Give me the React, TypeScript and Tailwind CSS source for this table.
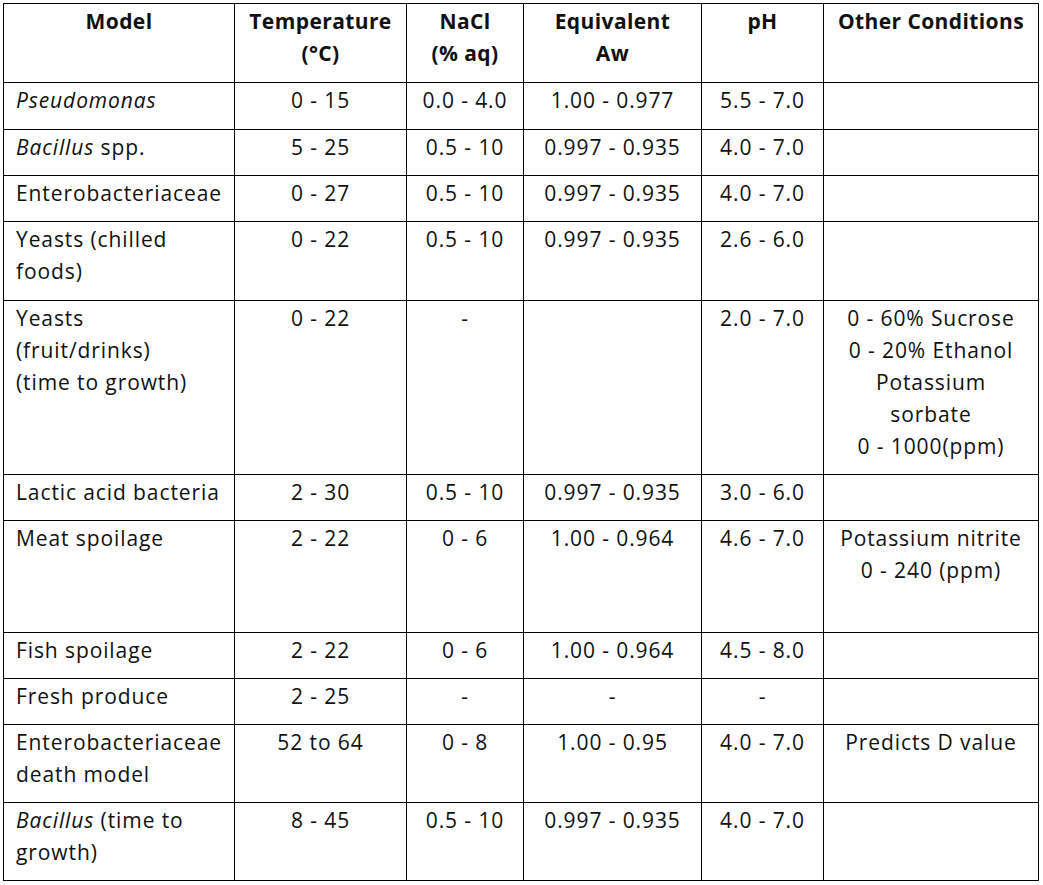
import React from 'react'

type Row = {
  model: React.ReactNode
  temp: string
  nacl: string
  aw: string
  ph: string
  other?: React.ReactNode
  h: string
}

const rows: Row[] = [
  { model: <i>Pseudomonas</i>, temp: '0 - 15', nacl: '0.0 - 4.0', aw: '1.00 - 0.977', ph: '5.5 - 7.0', h: 'h-[47px]' },
  { model: <><i>Bacillus</i> spp.</>, temp: '5 - 25', nacl: '0.5 - 10', aw: '0.997 - 0.935', ph: '4.0 - 7.0', h: 'h-[46px]' },
  { model: 'Enterobacteriaceae', temp: '0 - 27', nacl: '0.5 - 10', aw: '0.997 - 0.935', ph: '4.0 - 7.0', h: 'h-[46px]' },
  { model: <>Yeasts (chilled<br />foods)</>, temp: '0 - 22', nacl: '0.5 - 10', aw: '0.997 - 0.935', ph: '2.6 - 6.0', h: 'h-[79px]' },
  {
    model: <>Yeasts<br />(fruit/drinks)<br />(time to growth)</>,
    temp: '0 - 22', nacl: '-', aw: '', ph: '2.0 - 7.0',
    other: <>0 - 60% Sucrose<br />0 - 20% Ethanol<br />Potassium<br />sorbate<br />0 - 1000(ppm)</>,
    h: 'h-[174px]',
  },
  { model: 'Lactic acid bacteria', temp: '2 - 30', nacl: '0.5 - 10', aw: '0.997 - 0.935', ph: '3.0 - 6.0', h: 'h-[46px]' },
  {
    model: 'Meat spoilage', temp: '2 - 22', nacl: '0 - 6', aw: '1.00 - 0.964', ph: '4.6 - 7.0',
    other: <>Potassium nitrite<br />0 - 240 (ppm)</>, h: 'h-[112px]',
  },
  { model: 'Fish spoilage', temp: '2 - 22', nacl: '0 - 6', aw: '1.00 - 0.964', ph: '4.5 - 8.0', h: 'h-[46px]' },
  { model: 'Fresh produce', temp: '2 - 25', nacl: '-', aw: '-', ph: '-', h: 'h-[46px]' },
  {
    model: <>Enterobacteriaceae<br />death model</>, temp: '52 to 64', nacl: '0 - 8', aw: '1.00 - 0.95', ph: '4.0 - 7.0',
    other: 'Predicts D value', h: 'h-[78px]',
  },
  { model: <><i>Bacillus</i> (time to<br />growth)</>, temp: '8 - 45', nacl: '0.5 - 10', aw: '0.997 - 0.935', ph: '4.0 - 7.0', h: 'h-[78px]' },
]

const cell = 'border border-black align-top pt-[1px] px-[12px] whitespace-nowrap'

export default function App() {
  return (
    <div className="min-h-[885px] bg-white pl-[3px] pt-[3px] text-[21px] leading-[32px] tracking-[0.9px] text-[#111] font-['Open_Sans','Lato',sans-serif]">
      <table className="table-fixed border-collapse w-[1035px]">
        <colgroup>
          <col className="w-[231px]" />
          <col className="w-[172px]" />
          <col className="w-[117px]" />
          <col className="w-[178px]" />
          <col className="w-[122px]" />
          <col className="w-[215px]" />
        </colgroup>
        <thead>
          <tr className="h-[79px] font-bold tracking-[0.4px]">
            <th className={`${cell} text-center`}>Model</th>
            <th className={`${cell} text-center`}>Temperature<br />(°C)</th>
            <th className={`${cell} text-center`}>NaCl<br />(% aq)</th>
            <th className={`${cell} text-center`}>Equivalent<br />Aw</th>
            <th className={`${cell} text-center`}>pH</th>
            <th className={`${cell} text-center`}>Other Conditions</th>
          </tr>
        </thead>
        <tbody>
          {rows.map((r, i) => (
            <tr key={i} className={r.h}>
              <td className={`${cell} text-left`}>{r.model}</td>
              <td className={`${cell} text-center`}>{r.temp}</td>
              <td className={`${cell} text-center`}>{r.nacl}</td>
              <td className={`${cell} text-center`}>{r.aw}</td>
              <td className={`${cell} text-center`}>{r.ph}</td>
              <td className={`${cell} text-center`}>{r.other}</td>
            </tr>
          ))}
        </tbody>
      </table>
    </div>
  )
}
